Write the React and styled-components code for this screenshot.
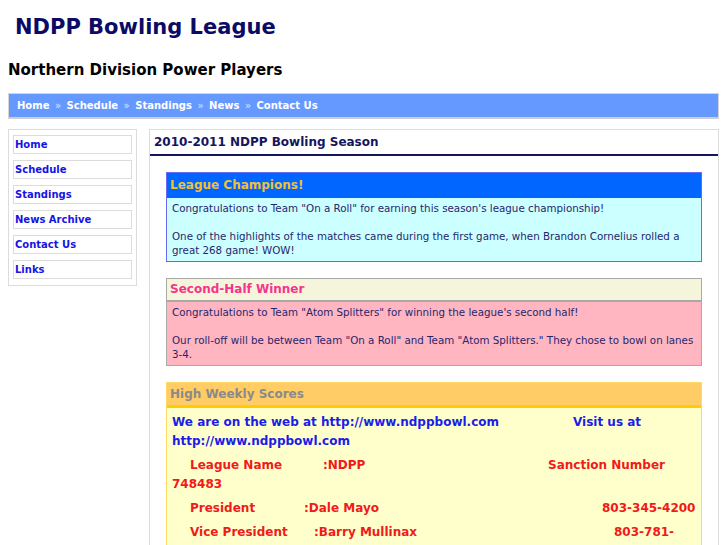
import React from "react"
import styled, { createGlobalStyle } from 'styled-components'

const Global = createGlobalStyle`
  html, body { margin: 0; padding: 0; background: #fff; }
  body { font-family: "DejaVu Sans", Verdana, sans-serif; }
`

const Page = styled.div`
  padding: 0 8px;
`

const Title = styled.h1`
  margin: 0;
  padding: 14px 0 0 7px;
  font-size: 21px;
  line-height: 27px;
  font-weight: bold;
  color: #0b0b66;
`

const SubTitle = styled.h2`
  margin: 0;
  padding-top: 20px;
  font-size: 15px;
  line-height: 18px;
  font-weight: bold;
  color: #000;
`

const NavBar = styled.div`
  margin-top: 14px;
  height: 23px;
  line-height: 23px;
  background: #6699ff;
  border: 1px solid #d4d4d4;
  border-bottom: 2px solid #cfcfcf;
  padding-left: 8px;
  color: #fff;
  font-size: 10px;
  font-weight: bold;
  white-space: nowrap;
`

const NavSep = styled.span`
  display: inline-block;
  margin: 0 5.5px;
  font-weight: normal;
  color: #dde6ff;
`

const Columns = styled.div`
  display: flex;
  align-items: flex-start;
  gap: 12px;
  margin-top: 10px;
`

const Side = styled.ul`
  width: 119px;
  flex: none;
  margin: 0;
  padding: 5px 4px 0 4px;
  border: 1px solid #dcdcdc;
  list-style: none;
`

const SideItem = styled.li`
  height: 17px;
  line-height: 17px;
  border: 1px solid #dcdcdc;
  margin-bottom: 6px;
  padding-left: 1px;
  font-size: 10px;
  font-weight: bold;
  color: #1414e6;
`

const Main = styled.div`
  flex: 1;
  border: 1px solid #dcdcdc;
  min-height: 430px;
  padding-bottom: 20px;
`

const MainHead = styled.div`
  height: 24px;
  line-height: 24px;
  padding-left: 4px;
  border-bottom: 2px solid #15155f;
  font-size: 12px;
  font-weight: bold;
  color: #15155f;
`

const Boxes = styled.div`
  display: flex;
  flex-direction: column;
  gap: 16px;
  padding: 16px 16px 0 16px;
`

const Box = styled.div`
  border: 1px solid ${p => p.edge};
`

const BoxHead = styled.div`
  height: ${p => p.h}px;
  line-height: ${p => p.h}px;
  padding-left: 3px;
  background: ${p => p.bg};
  color: ${p => p.fg};
  border-bottom: ${p => p.sep};
  font-size: 12px;
  font-weight: bold;
`

const BoxBody = styled.div`
  background: ${p => p.bg};
  padding: 3px 3px 4px 5px;
  font-size: 10.3px;
  line-height: 14px;
  color: #26266e;
`

const ScoreBody = styled.div`
  background: #ffffcc;
  padding: 5px 5px 20px 5px;
  font-size: 12px;
  font-weight: bold;
  line-height: 19px;
`

const Para = styled.p`
  margin: 0 0 5px 0;
  color: ${p => p.c};
  text-indent: ${p => p.indent || 0}px;
`

const Cell = styled.span`
  display: inline-block;
  width: ${p => p.w}px;
  text-indent: 0;
`

const Sep = () => <NavSep>»</NavSep>

const App = () => {
  return (
    <>
      <Global />
      <Page>
        <Title>NDPP Bowling League</Title>
        <SubTitle>Northern Division Power Players</SubTitle>
        <NavBar>
          Home<Sep />Schedule<Sep />Standings<Sep />News<Sep />Contact Us
        </NavBar>
        <Columns>
          <Side>
            <SideItem>Home</SideItem>
            <SideItem>Schedule</SideItem>
            <SideItem>Standings</SideItem>
            <SideItem>News Archive</SideItem>
            <SideItem>Contact Us</SideItem>
            <SideItem>Links</SideItem>
          </Side>
          <Main>
            <MainHead>2010-2011 NDPP Bowling Season</MainHead>
            <Boxes>
              <Box edge="#6a6af5">
                <BoxHead h={24} bg="#0066ff" fg="#f2c12e" sep="1px solid #0066ff">League Champions!</BoxHead>
                <BoxBody bg="#ccffff">
                  Congratulations to Team "On a Roll" for earning this season's league championship!
                  <br /><br />
                  One of the highlights of the matches came during the first game, when Brandon Cornelius rolled a great 268 game! WOW!
                </BoxBody>
              </Box>
              <Box edge="#aaaaaa">
                <BoxHead h={21} bg="#f5f5dc" fg="#f5338f" sep="2px solid #a8a8a8">Second-Half Winner</BoxHead>
                <BoxBody bg="#ffb6c1">
                  Congratulations to Team "Atom Splitters" for winning the league's second half!
                  <br /><br />
                  Our roll-off will be between Team "On a Roll" and Team "Atom Splitters." They chose to bowl on lanes 3-4.
                </BoxBody>
              </Box>
              <Box edge="#ffd966">
                <BoxHead h={22} bg="#ffcc66" fg="#8a8a8a" sep="3px solid #ffcc00">High Weekly Scores</BoxHead>
                <ScoreBody>
                  <Para c="#1c1ce8">
                    <Cell w={401}>We are on the web at http://www.ndppbowl.com</Cell>Visit us at http://www.ndppbowl.com
                  </Para>
                  <Para c="#f01a1a" indent={18}>
                    <Cell w={133}>League Name</Cell><Cell w={225}>:NDPP</Cell>Sanction Number 748483
                  </Para>
                  <Para c="#f01a1a" indent={18}>
                    <Cell w={114}>President</Cell><Cell w={298}>:Dale Mayo</Cell>803-345-4200
                  </Para>
                  <Para c="#f01a1a" indent={18}>
                    <Cell w={124}>Vice President</Cell><Cell w={300}>:Barry Mullinax</Cell>803-781-
                  </Para>
                </ScoreBody>
              </Box>
            </Boxes>
          </Main>
        </Columns>
      </Page>
    </>
  )
}

export default App
